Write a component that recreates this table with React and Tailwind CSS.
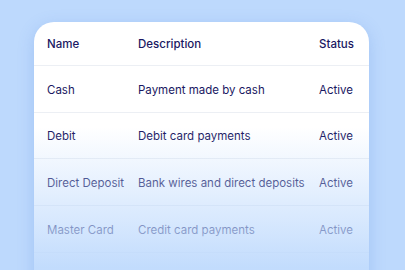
import React from 'react';

const rows = [
    { name: 'Cash', description: 'Payment made by cash', status: 'Active' },
    { name: 'Debit', description: 'Debit card payments', status: 'Active' },
    { name: 'Direct Deposit', description: 'Bank wires and direct deposits', status: 'Active' },
    { name: 'Master Card', description: 'Credit card payments', status: 'Active' },
];

const App = () => {
    return (
        <div
            className="w-[405px] h-[270px] overflow-hidden bg-[#bdd9fd] pt-[22px] pl-[34px]"
            style={{ fontFamily: 'Inter, "Noto Sans", sans-serif' }}
        >
            <div className="relative w-[335px] h-[300px] bg-white rounded-t-[20px] shadow-[0_4px_16px_rgba(80,130,220,0.25)] overflow-hidden">
                <div className="grid grid-cols-[91px_181px_1fr] items-center h-[44px] pt-[3px] px-[13px] border-b border-[#eceff4] text-[11.5px] font-medium text-[#1a1862]">
                    <div>Name</div>
                    <div>Description</div>
                    <div>Status</div>
                </div>
                {rows.map((row) => (
                    <div
                        key={row.name}
                        className="grid grid-cols-[91px_181px_1fr] items-center h-[46.67px] pt-[3px] px-[13px] border-b border-[#eceff4] text-[11.5px] text-[#1a1862]"
                    >
                        <div>{row.name}</div>
                        <div className="whitespace-nowrap">{row.description}</div>
                        <div>{row.status}</div>
                    </div>
                ))}
                {/* fade the lower rows into the page background */}
                <div className="absolute left-0 right-0 top-[105px] bottom-0 bg-gradient-to-b from-[#bdd9fd]/0 via-[#bdd9fd]/60 via-[48%] to-[#bdd9fd]/92 to-[72%] pointer-events-none" />
            </div>
        </div>
    );
};

export default App;
